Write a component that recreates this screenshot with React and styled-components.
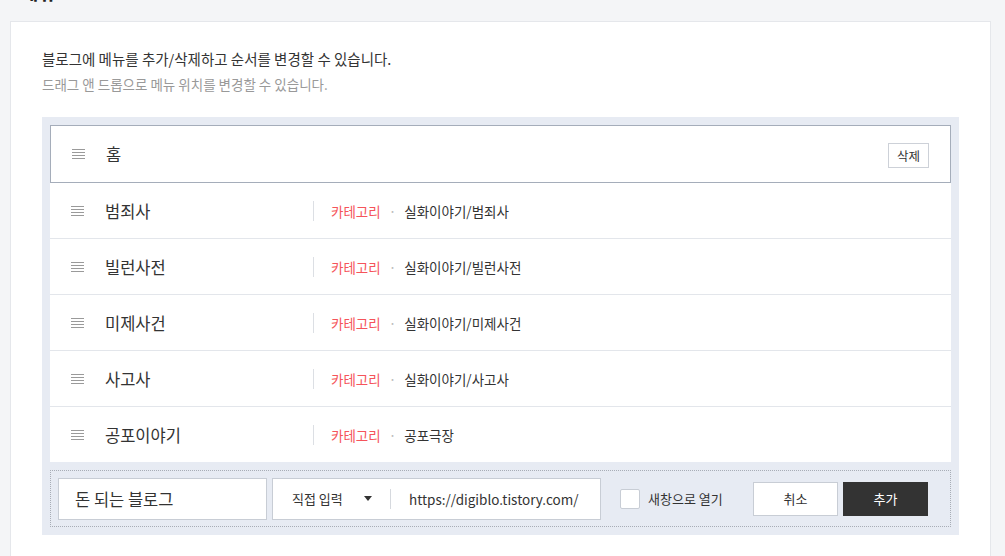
import React, { useState } from 'react'
import styled, { createGlobalStyle } from 'styled-components'

const Global = createGlobalStyle`
  html, body { margin: 0; padding: 0; }
  body {
    background: #f4f5f7;
    font-family: "Noto Sans CJK KR", "Noto Sans", sans-serif;
    color: #333;
  }
  * { box-sizing: border-box; }
`

const Page = styled.div`
  padding: 0 14px 0 10px;
  height: 556px;
  overflow: hidden;
`

const TitlePeek = styled.div`
  height: 21px;
  overflow: hidden;
  padding-left: 10px;
  h2 {
    margin: -21px 0 0;
    font-size: 20px;
    font-weight: 700;
    line-height: 26px;
    color: #222;
  }
`

const Card = styled.section`
  background: #fff;
  border: 1px solid #e5e7eb;
  padding: 26px 31px 40px;
  min-height: 600px;
`

const Lead = styled.p`
  margin: 0;
  font-size: 14.5px;
  line-height: 22px;
  color: #333;
`

const Sub = styled.p`
  margin: 4px 0 0;
  font-size: 13.5px;
  line-height: 20px;
  color: #999;
`

const Board = styled.div`
  margin-top: 23px;
  background: #e7ebf3;
  padding: 8px;
`

const List = styled.ul`
  list-style: none;
  margin: 0;
  padding: 0;
  background: #fff;
`

const Row = styled.li`
  display: flex;
  align-items: center;
  height: ${p => (p.$active ? '58px' : '56px')};
  padding: 0 21px 0 21px;
  border: ${p => (p.$active ? '1px solid #a5adba' : 'none')};
  border-bottom: 1px solid ${p => (p.$active ? '#a5adba' : '#e3e6eb')};
  &:last-child { border-bottom: none; height: 55px; }
`

const Handle = styled.span`
  display: flex;
  flex-direction: column;
  gap: 2px;
  width: 13px;
  margin-right: 21px;
  i {
    display: block;
    height: 1px;
    background: #9a9a9a;
  }
`

const Name = styled.span`
  width: 208px;
  font-size: 16.5px;
  color: #333;
`

const Link = styled.span`
  display: flex;
  align-items: center;
  height: 20px;
  padding-left: 17px;
  border-left: 1px solid #dcdfe4;
  font-size: 13.5px;
`

const Type = styled.span`
  color: #f5545a;
`

const Dot = styled.span`
  margin: 0 8px;
  color: #bbb;
`

const Path = styled.span`
  color: #333;
`

const Delete = styled.button`
  margin-left: auto;
  margin-top: 2px;
  width: 41px;
  height: 25px;
  background: #fff;
  border: 1px solid #cdd1d8;
  font-family: inherit;
  font-size: 12.5px;
  color: #333;
  padding: 0;
`

const AddRow = styled.div`
  display: flex;
  align-items: center;
  margin-top: 8px;
  height: 57px;
  padding: 0 22px 0 7px;
  border: 1px dotted #a8adb6;
`

const Field = styled.div`
  display: flex;
  align-items: center;
  height: 42px;
  width: ${p => p.$w}px;
  margin-right: ${p => p.$mr || 0}px;
  background: #fff;
  border: 1px solid #c8cdd5;
  color: #333;
`

const NameText = styled.span`
  padding-left: 16px;
  font-size: 16.5px;
`

const Select = styled.span`
  display: flex;
  align-items: center;
  width: 118px;
  height: 20px;
  padding-left: 19px;
  border-right: 1px solid #d6d9de;
  font-size: 13px;
  svg { margin-left: 21px; }
`

const Url = styled.span`
  padding-left: 18px;
  font-size: 13.5px;
  color: #333;
`

const Check = styled.label`
  display: flex;
  align-items: center;
  gap: 8px;
  font-size: 13px;
  color: #333;
  margin-right: auto;
  span.box {
    width: 20px;
    height: 20px;
    background: #fff;
    border: 1px solid #c8cdd5;
    border-radius: 2px;
  }
`

const Btn = styled.button`
  width: 85px;
  height: 34px;
  margin-left: ${p => (p.$dark ? 5 : 0)}px;
  padding: 0;
  font-family: inherit;
  font-size: 13px;
  background: ${p => (p.$dark ? '#333' : '#fff')};
  color: ${p => (p.$dark ? '#fff' : '#333')};
  border: 1px solid ${p => (p.$dark ? '#333' : '#c8cdd5')};
`

const menus = [
  { name: '범죄사', path: '실화이야기/범죄사' },
  { name: '빌런사전', path: '실화이야기/빌런사전' },
  { name: '미제사건', path: '실화이야기/미제사건' },
  { name: '사고사', path: '실화이야기/사고사' },
  { name: '공포이야기', path: '공포극장' },
]

function Grip() {
  return (
    <Handle>
      <i /><i /><i /><i />
    </Handle>
  )
}

export default function App() {
  const [newWin, setNewWin] = useState(false)
  return (
    <>
      <Global />
      <Page>
        <TitlePeek><h2>메뉴</h2></TitlePeek>
        <Card>
          <Lead>블로그에 메뉴를 추가/삭제하고 순서를 변경할 수 있습니다.</Lead>
          <Sub>드래그 앤 드롭으로 메뉴 위치를 변경할 수 있습니다.</Sub>
          <Board>
            <List>
              <Row $active>
                <Grip />
                <Name>홈</Name>
                <Delete>삭제</Delete>
              </Row>
              {menus.map(m => (
                <Row key={m.name}>
                  <Grip />
                  <Name>{m.name}</Name>
                  <Link>
                    <Type>카테고리</Type>
                    <Dot>·</Dot>
                    <Path>{m.path}</Path>
                  </Link>
                </Row>
              ))}
            </List>
            <AddRow>
              <Field $w={209} $mr={5}>
                <NameText>돈 되는 블로그</NameText>
              </Field>
              <Field $w={329} $mr={19}>
                <Select>
                  직접 입력
                  <svg width="8" height="5" viewBox="0 0 8 5"><path d="M0 0h8L4 5z" fill="#333" /></svg>
                </Select>
                <Url>https://digiblo.tistory.com/</Url>
              </Field>
              <Check onClick={() => setNewWin(!newWin)}>
                <span className="box" />
                새창으로 열기
              </Check>
              <Btn>취소</Btn>
              <Btn $dark>추가</Btn>
            </AddRow>
          </Board>
        </Card>
      </Page>
    </>
  )
}
